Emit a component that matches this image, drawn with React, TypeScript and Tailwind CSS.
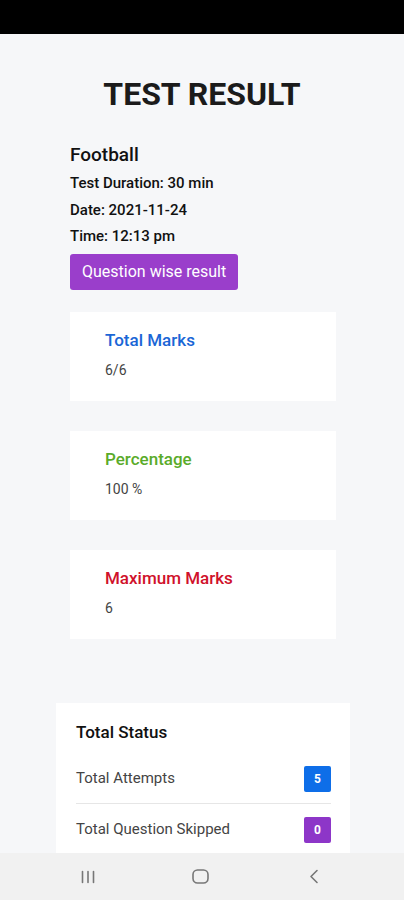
import React from 'react';

const stats = [
  { title: 'Total Marks', value: '6/6', color: 'text-[#1a66d6]' },
  { title: 'Percentage', value: '100 %', color: 'text-[#5aab2a]' },
  { title: 'Maximum Marks', value: '6', color: 'text-[#d0112b]' },
];

const App: React.FC = () => {
  return (
    <div className="h-[900px] w-[404px] flex flex-col bg-[#f6f7f9] overflow-hidden font-['Roboto',sans-serif]">
      {/* Status bar */}
      <div className="h-[34px] bg-black shrink-0" />

      <div className="flex-1 overflow-hidden">
        <h1 className="mt-[40px] text-center text-[32px] leading-[40px] font-bold text-[#1b1b1b]">TEST RESULT</h1>

        <div className="px-[70px] mt-[30px]">
          <div className="text-[19px] leading-[22px] font-medium text-[#111]">Football</div>
          <div className="mt-[4px] text-[15px] leading-[26.5px] font-medium text-[#111]">
            <div>Test Duration: 30 min</div>
            <div>Date: 2021-11-24</div>
            <div>Time: 12:13 pm</div>
          </div>
          <button className="mt-[4px] h-[36px] px-[12px] rounded-[3px] bg-[#9a3ecb] text-white text-[16px]">
            Question wise result
          </button>

          {stats.map((s, i) => (
            <div
              key={s.title}
              className={`${i === 0 ? 'mt-[22px]' : 'mt-[30px]'} w-[266px] h-[89px] bg-white pl-[35px] pt-[18px]`}
            >
              <div className={`text-[17px] leading-[20px] font-medium ${s.color}`}>{s.title}</div>
              <div className="mt-[10px] text-[14px] leading-[20px] text-[#444]">{s.value}</div>
            </div>
          ))}
        </div>

        {/* Total status */}
        <div className="ml-[56px] mr-[54px] mt-[64px] bg-white pl-[20px] pr-[19px] pt-[19px] pb-[12px]">
          <div className="text-[17px] leading-[20px] font-medium text-[#111]">Total Status</div>
          <div className="mt-[20px] flex items-center justify-between h-[34px] border-b border-[#e6e6e6] pb-[7px] box-content">
            <span className="text-[15px] text-[#444]">Total Attempts</span>
            <span className="w-[27px] h-[26px] flex items-center justify-center rounded-[2px] bg-[#0e6ee8] text-white text-[12px] font-bold">5</span>
          </div>
          <div className="mt-[9px] flex items-center justify-between h-[34px]">
            <span className="text-[15px] text-[#444]">Total Question Skipped</span>
            <span className="w-[27px] h-[26px] flex items-center justify-center rounded-[2px] bg-[#8d36c8] text-white text-[12px] font-bold">0</span>
          </div>
        </div>
      </div>

      {/* Navigation bar */}
      <div className="h-[47px] shrink-0 bg-[#f1f1f1] flex items-center pl-[80px] text-[#777]">
        <svg width="16" height="14" viewBox="0 0 16 14" fill="none" stroke="currentColor" strokeWidth="1.6" strokeLinecap="round">
          <path d="M2.5 1.5v11M8 1.5v11M13.5 1.5v11" />
        </svg>
        <svg className="ml-[96px]" width="17" height="15" viewBox="0 0 17 15" fill="none" stroke="currentColor" strokeWidth="1.6">
          <rect x="1" y="1" width="15" height="13" rx="4.5" />
        </svg>
        <svg className="ml-[100px]" width="10" height="15" viewBox="0 0 10 15" fill="none" stroke="currentColor" strokeWidth="1.6" strokeLinecap="round" strokeLinejoin="round">
          <path d="M8 1.5L2 7.5l6 6" />
        </svg>
      </div>
    </div>
  );
};

export default App;
